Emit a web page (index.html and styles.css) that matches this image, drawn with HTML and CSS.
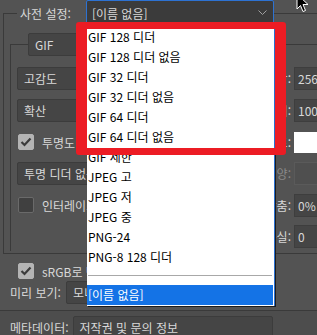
FILE: index.html
```html
<!DOCTYPE html>
<html lang="ko">
<head>
    <meta charset="UTF-8">
    <title>웹용으로 저장 - 사전 설정</title>
    <link rel="stylesheet" href="styles.css">
</head>
<body>
    <div class="dialog">
        <fieldset class="preset">
            <legend class="preset-legend">
                <span class="preset-label">사전 설정:</span>
                <div class="select select-focus">
                    <span>[이름 없음]</span>
                    <svg class="chevron" width="9" height="6" viewBox="0 0 9 6"><polyline points="0.5,0.5 4.5,4.5 8.5,0.5" fill="none" stroke="#a0a0a0" stroke-width="1"/></svg>
                </div>
            </legend>

            <fieldset class="format">
                <legend class="format-legend">
                    <div class="select format-select">GIF</div>
                </legend>
                <div class="rows">
                    <div class="row">
                        <div class="left"><div class="select">고감도</div></div>
                        <span class="field-label">색상:</span>
                        <div class="input">256</div>
                    </div>
                    <div class="row">
                        <div class="left"><div class="select">확산</div></div>
                        <span class="field-label">디더:</span>
                        <div class="input">100%</div>
                    </div>
                    <div class="row">
                        <div class="left">
                            <label class="check"><span class="box checked"><svg width="12" height="10" viewBox="0 0 12 10"><polyline points="1.5,5 4.5,8 10.5,1.5" fill="none" stroke="#3b3b3b" stroke-width="2.2"/></svg></span>투명도</label>
                        </div>
                        <span class="field-label">매트:</span>
                        <div class="input input-white"></div>
                    </div>
                    <div class="row row-short">
                        <div class="left"><div class="select">투명 디더 없음</div></div>
                        <span class="field-label disabled">양:</span>
                        <div class="input input-disabled"></div>
                    </div>
                    <div class="row">
                        <div class="left">
                            <label class="check"><span class="box"></span>인터레이스</label>
                        </div>
                        <span class="field-label">웹에 맞춤:</span>
                        <div class="input">0%</div>
                    </div>
                    <div class="row row-last">
                        <div class="left"></div>
                        <span class="field-label">손실:</span>
                        <div class="input">0</div>
                    </div>
                </div>
            </fieldset>
        </fieldset>

        <div class="srgb-row">
            <label class="check"><span class="box checked"><svg width="12" height="10" viewBox="0 0 12 10"><polyline points="1.5,5 4.5,8 10.5,1.5" fill="none" stroke="#3b3b3b" stroke-width="2.2"/></svg></span>sRGB로 변환</label>
        </div>
        <div class="preview-row">
            <span class="row-label">미리 보기:</span>
            <div class="select preview-select">모니터 색상</div>
        </div>
        <div class="bottom">
            <div class="meta-row">
                <span class="row-label">메타데이터:</span>
                <div class="select meta-select">저작권 및 문의 정보</div>
            </div>
        </div>

        <!-- 열린 사전 설정 목록 -->
        <div class="dropdown">
            <div class="opt">GIF 128 디더</div>
            <div class="opt">GIF 128 디더 없음</div>
            <div class="opt">GIF 32 디더</div>
            <div class="opt">GIF 32 디더 없음</div>
            <div class="opt">GIF 64 디더</div>
            <div class="opt">GIF 64 디더 없음</div>
            <div class="opt">GIF 제한</div>
            <div class="opt">JPEG 고</div>
            <div class="opt">JPEG 저</div>
            <div class="opt">JPEG 중</div>
            <div class="opt">PNG-24</div>
            <div class="opt">PNG-8 128 디더</div>
            <div class="sep"></div>
            <div class="opt selected">[이름 없음]</div>
        </div>

        <!-- 빨간 표시 상자 -->
        <div class="mark"></div>

        <svg class="cursor" width="13" height="20" viewBox="0 0 13 20">
            <path d="M1 1 L1 16 L4.5 12.5 L7 18.5 L9.5 17.5 L7 11.5 L12 11.5 Z" fill="#000" stroke="#fff" stroke-width="1"/>
        </svg>
    </div>
</body>
</html>
```

FILE: styles.css
```css
body {
    margin: 0;
    background-color: #535353;
    font-family: "Noto Sans CJK KR", "Noto Sans", sans-serif;
    font-size: 12px;
    color: #d8d8d8;
}
.dialog {
    position: relative;
    width: 317px;
    height: 335px;
    overflow: hidden;
}
fieldset {
    margin: 0;
    padding: 0;
    min-width: 0;
}
legend {
    padding: 0;
}
.preset {
    margin-left: 3px;
    width: 420px;
    border: 1px solid #3a3a3a;
    border-right: none;
    padding-bottom: 2px;
}
.preset-legend {
    display: flex;
    align-items: center;
    margin-left: 13px;
    padding-left: 3px;
}
.preset-label {
    margin-right: 15px;
}
.select {
    box-sizing: border-box;
    height: 23px;
    line-height: 21px;
    padding: 0 6px;
    background-color: #454545;
    border: 1px solid #3c3c3c;
    border-radius: 2px;
    white-space: nowrap;
}
.select-focus {
    display: flex;
    align-items: center;
    justify-content: space-between;
    width: 188px;
    height: 26px;
    padding: 0 5px 0 5px;
    background-color: #3b3b3b;
    border-color: #2d72d2;
}
.chevron {
    margin-right: 1px;
}
.format {
    margin: 7px 0 0 6px;
    border: 1px solid #3a3a3a;
    border-right: none;
    border-bottom: none;
}
.format-legend {
    margin-left: 17px;
}
.format-select {
    width: 120px;
}
.rows {
    padding: 6px 0 0 6px;
}
.row {
    display: flex;
    align-items: center;
    height: 32px;
}
.row-short {
    height: 31px;
}
.row-last {
    height: 30px;
}
.left {
    width: 190px;
}
.left .select {
    width: 160px;
}
.field-label {
    width: 84px;
    text-align: right;
    white-space: nowrap;
}
.field-label.disabled {
    color: #8a8a8a;
}
.input {
    box-sizing: border-box;
    width: 60px;
    height: 23px;
    line-height: 21px;
    margin-left: 3px;
    padding-left: 3px;
    background-color: #454545;
    border: 1px solid #3e3e3e;
    white-space: nowrap;
}
.input-white {
    height: 21px;
    background-color: #fff;
    border-color: #fff;
}
.input-disabled {
    background-color: #4f4f4f;
    border-color: #5a5a5a;
}
.check {
    display: flex;
    align-items: center;
    margin-left: 1px;
    white-space: nowrap;
}
.box {
    box-sizing: border-box;
    display: flex;
    align-items: center;
    justify-content: center;
    width: 16px;
    height: 16px;
    margin-right: 8px;
    background-color: #404040;
    border: 1px solid #6a6a6a;
    border-radius: 2px;
}
.box.checked {
    background-color: #b4b4b4;
    border-color: #b4b4b4;
}
.srgb-row {
    height: 18px;
    margin: 8px 0 0 17px;
    display: flex;
    align-items: center;
}
.preview-row {
    display: flex;
    align-items: center;
    margin: 1px 0 0 10px;
    height: 23px;
}
.row-label {
    white-space: nowrap;
}
.preview-select {
    margin-left: 5px;
    width: 160px;
}
.bottom {
    margin-top: 6px;
    border-top: 1px solid #3a3a3a;
    background-color: #4d4d4d;
    height: 30px;
}
.meta-row {
    display: flex;
    align-items: center;
    margin: 5px 0 0 10px;
    height: 23px;
}
.meta-select {
    margin-left: 4px;
    width: 200px;
}
.dropdown {
    position: absolute;
    left: 87px;
    top: 26px;
    width: 187px;
    padding: 1px 0;
    background-color: #fff;
    border-right: 1px solid #2a6fcf;
    box-shadow: 1px 1px 0 #1c1c1c;
}
.opt {
    height: 20px;
    line-height: 20px;
    padding-left: 1px;
    color: #000;
    white-space: nowrap;
}
.opt.selected {
    margin-right: 1px;
    background-color: #1473e6;
    color: #fff;
}
.sep {
    height: 1px;
    margin: 8px 2px 9px 1px;
    background-color: #a8a8a8;
}
.mark {
    position: absolute;
    left: 76px;
    top: 22px;
    width: 210px;
    height: 133px;
    box-sizing: border-box;
    border: solid #ec1c24;
    border-width: 7px 11px;
    border-radius: 3px;
}
.cursor {
    position: absolute;
    left: 296px;
    top: -7px;
}
```
